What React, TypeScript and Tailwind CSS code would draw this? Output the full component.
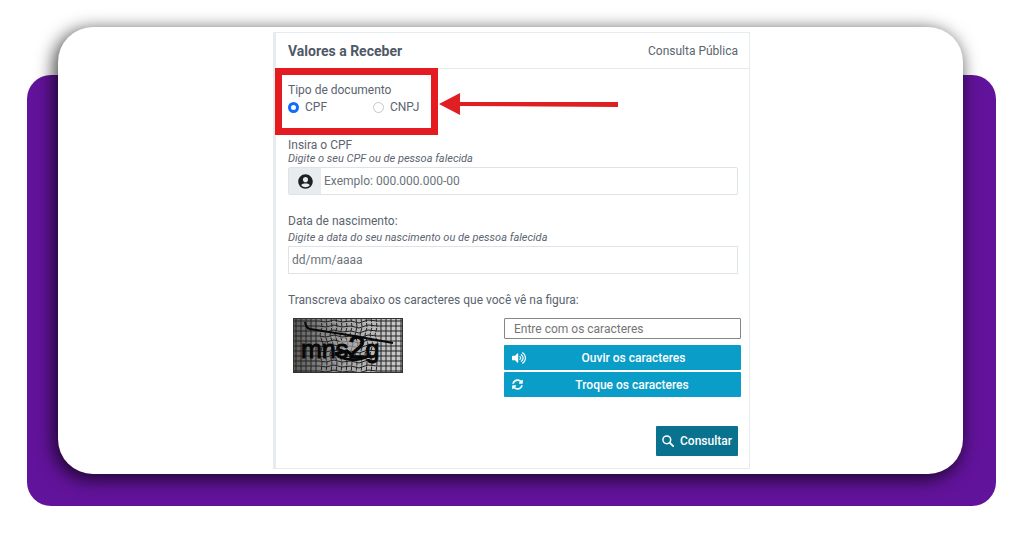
import { useState } from 'react';
import { FaSyncAlt, FaUserCircle, FaVolumeUp } from 'react-icons/fa';

const verticals = Array.from({ length: 22 }, (_, i) => i * 5 + 3);
const horizontals = Array.from({ length: 11 }, (_, i) => i * 5 + 3);

const Captcha = () => (
    <svg viewBox="0 0 110 55" className="w-[110px] h-[55px] ml-[5px]" role="img" aria-label="Captcha">
        <defs>
            <linearGradient id="paper" x1="0" x2="1">
                <stop offset="0" stopColor="#5c5c5c" />
                <stop offset="0.5" stopColor="#a8a8a8" />
                <stop offset="1" stopColor="#cccccc" />
            </linearGradient>
        </defs>
        <rect width="110" height="55" fill="url(#paper)" />
        <g stroke="#222222" strokeWidth="1" fill="none">
            {verticals.map(x => {
                const near = Math.abs(x - 55) < 30;
                return near
                    ? <path key={x} strokeDasharray="4 1" d={`M${x} 0 l1 9 l-2 8 l3 9 l-3 10 l2 9 l-1 10`} />
                    : <path key={x} d={`M${x} 0 V55`} />;
            })}
            {horizontals.map(y => (
                <path key={y} d={`M0 ${y} H26 l7 1 l8 -2 l8 2 l9 -1 l8 2 l9 -3 l9 1 H110`} />
            ))}
        </g>
        <ellipse cx="56" cy="27" rx="12" ry="6" fill="#aaaaaa" opacity="0.6" />
        <rect x="0.5" y="0.5" width="109" height="54" fill="none" stroke="#333333" />
        <text x="8" y="40" fontSize="25" fill="#080808" stroke="#080808" strokeWidth="1" className="font-['Liberation_Sans']">
            mns<tspan fontSize="31">2</tspan>g
        </text>
        <path d="M12 4 Q13 10 17 11 Q58 17 100 25" fill="none" stroke="#080808" strokeWidth="2" />
        <path d="M42 36 L54 33 L60 38 M47 39 Q60 45 76 38" fill="none" stroke="#080808" strokeWidth="3" />
    </svg>
);

const SearchIcon = () => (
    <svg viewBox="0 0 12 12" className="size-3" fill="none" stroke="currentColor" aria-hidden="true">
        <circle cx="4.8" cy="4.8" r="3.9" strokeWidth="1.5" />
        <path d="M7.6 7.6 L11.2 11.2" strokeWidth="1.8" strokeLinecap="round" />
    </svg>
);

const Highlight = () => (
    <>
        <div className="absolute -left-px -top-px w-[163px] h-[67px] border-7 border-[#e41b20] pointer-events-none" />
        <svg viewBox="0 0 180 24" className="absolute left-[162px] top-[23px] w-[180px] h-6 pointer-events-none" aria-hidden="true">
            <path d="M1 12 L22 1 V10 L180 10 V15 L22 14 V23 Z" fill="#e01f22" />
        </svg>
    </>
);

const documentTypes = [
    { id: 'cpf', label: 'CPF' },
    { id: 'cnpj', label: 'CNPJ' },
];

const DocumentType = ({ value, onChange }) => (
    <fieldset>
        <legend className="leading-4">Tipo de documento</legend>
        <div className="flex">
            {documentTypes.map(type => (
                <label key={type.id} className="flex items-center w-[85px] gap-[6px] leading-[18px]">
                    <input
                        type="radio"
                        name="documentType"
                        value={type.id}
                        checked={value === type.id}
                        onChange={() => onChange(type.id)}
                        className="appearance-none size-[11px] rounded-full border border-[#c4c8cc] bg-white checked:border-[3px] checked:border-[#0d6efd]"
                    />
                    {type.label}
                </label>
            ))}
        </div>
    </fieldset>
);

export default function App() {
    const [documentType, setDocumentType] = useState('cpf');

    return (
        <div className="bg-white pl-[27px] pr-7 pt-[75px] pb-[30px] font-['Roboto',sans-serif] text-xs text-[#5b6470]">
            <div className="rounded-3xl bg-[#62139b] pl-[31px] pr-[33px] pb-8">
                <main className="relative -top-12 -mb-12 rounded-[35px] bg-white py-[5px] pl-[2px] shadow-[-3px_4px_18px_1px_rgba(0,0,0,0.75)]">
                    <form
                        className="mx-auto max-w-[477px] border border-l-3 border-[#e6ebee]"
                        onSubmit={e => e.preventDefault()}>
                        <header className="flex items-center justify-between h-9 pl-3 pr-[11px] border-b border-[#e6e9ec]">
                            <h1 className="text-sm font-bold text-[#4f5966]">Valores a Receber</h1>
                            <span>Consulta Pública</span>
                        </header>

                        <div className="relative pl-3 pr-[11px] pt-[13px] pb-3">
                            <Highlight />
                            <DocumentType value={documentType} onChange={setDocumentType} />

                            <div className="mt-[21px]">
                                <label htmlFor="cpf" className="block leading-4">Insira o CPF</label>
                                <p id="cpf-hint" className="text-[11px] leading-3 italic">Digite o seu CPF ou de pessoa falecida</p>
                                <div className="flex h-7 mt-[2px] border border-[#dfe3e7] rounded-xs">
                                    <span className="flex items-center justify-center w-8 bg-[#e9ecef] text-[#1d2126]">
                                        <FaUserCircle className="size-[15px]" />
                                    </span>
                                    <input id="cpf" aria-describedby="cpf-hint" placeholder="Exemplo: 000.000.000-00" className="flex-1 min-w-0 px-[3px] outline-none placeholder:text-[#6b737b]" />
                                </div>
                            </div>

                            <div className="mt-[18px]">
                                <label htmlFor="birth" className="block leading-4">Data de nascimento:</label>
                                <p id="birth-hint" className="mt-[3px] text-[11px] leading-3 italic">Digite a data do seu nascimento ou de pessoa falecida</p>
                                <input id="birth" aria-describedby="birth-hint" placeholder="dd/mm/aaaa" className="block w-full h-7 mt-[2px] px-[3px] border border-[#dfe3e7] placeholder:text-[#6b737b]" />
                            </div>

                            <label htmlFor="captcha" className="block mt-[18px] leading-4">
                                Transcreva abaixo os caracteres que você vê na figura:
                            </label>
                            <div className="flex justify-between mt-[10px] -mr-[3px]">
                                <Captcha />
                                <div className="flex flex-col w-[237px]">
                                    <input id="captcha" placeholder="Entre com os caracteres" className="h-[21px] px-[9px] border border-[#858585] rounded-[1px] placeholder:text-[#757575]" />
                                    <button type="button" className="flex items-center gap-2 h-[25px] mt-[6px] px-2 rounded-[1px] bg-[#0a9dc8] text-white font-medium">
                                        <FaVolumeUp className="size-[14px]" />
                                        <span className="flex-1">Ouvir os caracteres</span>
                                    </button>
                                    <button type="button" className="flex items-center gap-2 h-[25px] mt-[2px] px-2 rounded-[1px] bg-[#0a9dc8] text-white font-medium">
                                        <FaSyncAlt className="size-[11px]" />
                                        <span className="flex-1">Troque os caracteres</span>
                                    </button>
                                </div>
                            </div>

                            <button type="submit" className="flex items-center justify-center gap-[6px] w-[82px] h-[30px] mt-[29px] ml-auto rounded-[1px] bg-[#08728f] text-white font-medium">
                                <SearchIcon />
                                Consultar
                            </button>
                        </div>
                    </form>
                </main>
            </div>
        </div>
    );
}
